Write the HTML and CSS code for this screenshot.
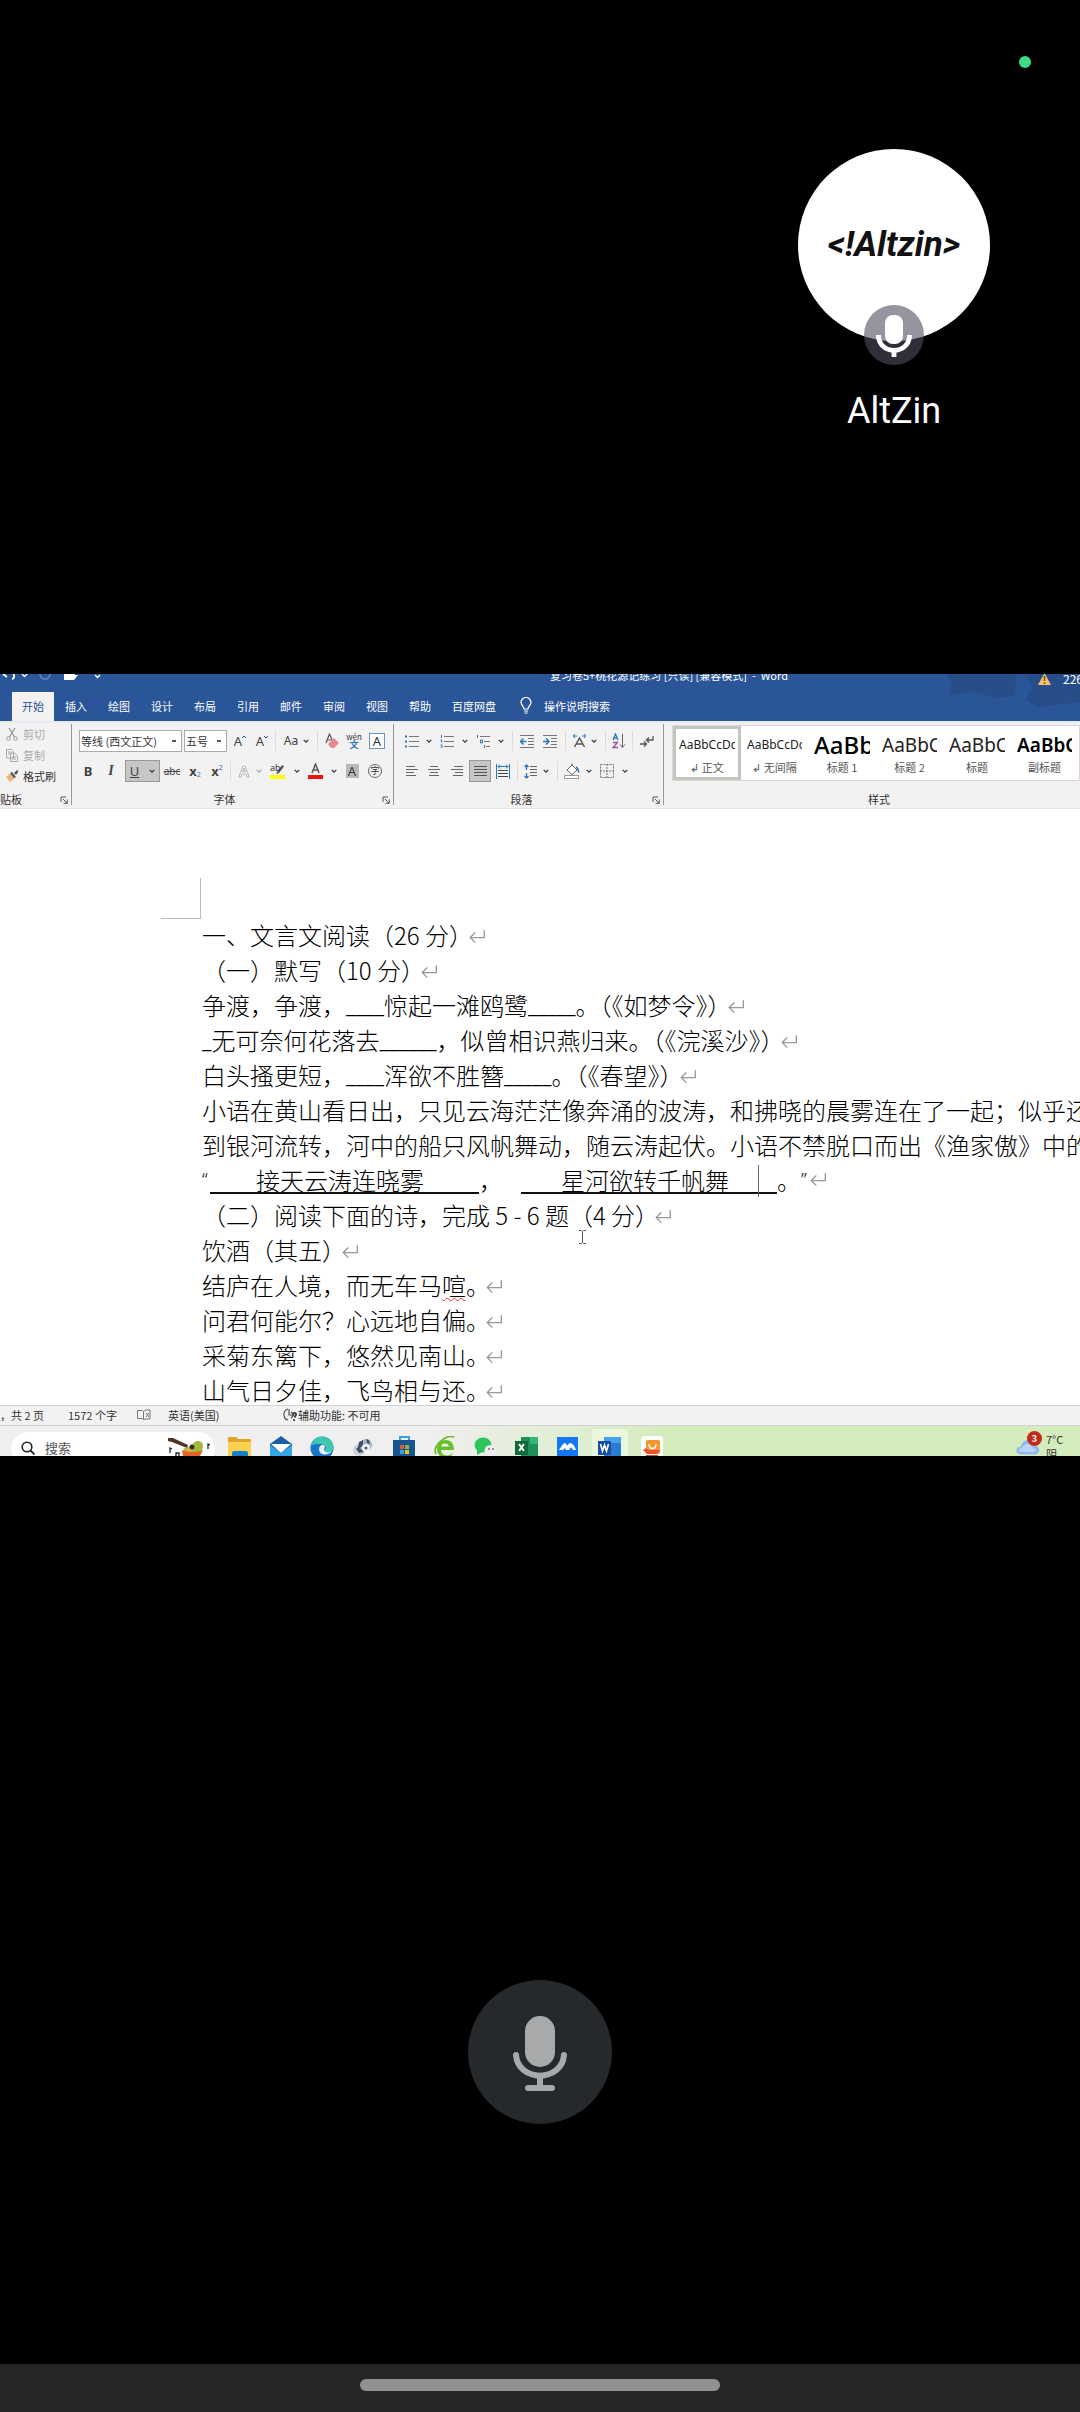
FILE: index.html
```html
<!DOCTYPE html>
<html lang="zh-CN">
<head>
<meta charset="utf-8">
<meta name="viewport" content="width=device-width, initial-scale=1">
<title>AltZin</title>
<link rel="stylesheet" href="styles.css">
</head>
<body>
<svg class="defs" aria-hidden="true">
  <symbol id="chev" viewBox="0 0 6 6"><path d="M.7 1.8 3 4.2 5.3 1.8" fill="none" stroke="#333" stroke-width="1.2"/></symbol>
  <symbol id="ret" viewBox="0 0 16 14"><path d="M14.500 1v6.500H2M6.500 3l-4.500 4.500 4.500 4.500" fill="none" stroke="#999" stroke-width="1.200"/></symbol>
  <symbol id="launch" viewBox="0 0 8 8"><path d="M1 6V1h5M3 3l4 4M7.300 3.500v3.800H3.500" fill="none" stroke="#555" stroke-width="1"/></symbol>
</svg>

<section class="speaker">
  <span class="privacy-dot"></span>
  <div class="person">
    <div class="avatar"><span class="logo">&lt;!Altzin&gt;</span>
      <span class="badge"><svg width="60" height="60" viewBox="0 0 60 60"><rect x="21" y="10" width="18" height="29" rx="8" fill="#fff"/><path d="M14.500 30c0 20.500 31 20.500 31 0M30 45v7" fill="none" stroke="#fff" stroke-width="4.800"/></svg></span>
    </div>
    <div class="name">AltZin</div>
  </div>
</section>

<main class="word">
  <header class="top">
    <svg class="top-art" width="133" height="40" viewBox="0 0 133 40"><path d="M0 0h70l-3 22-20 2-20-6-25 3 3-10zM78 0h55v28l-25 3-18 2-12-8 8-12z" fill="#26497f" opacity=".6"/></svg>
    <div class="titlebar">
      <div class="quick">
        <svg width="110" height="20" viewBox="0 0 110 20"><path d="M3 9l4 3M6 8h5c5 0 3 6 1 6" fill="none" stroke="#fff" stroke-width="1.800"/><path d="M22 9l2.500 2.500L27 9M95 10l2.500 2.500L100 10" fill="none" stroke="#fff" stroke-width="1.300"/><circle cx="45" cy="9" r="5" fill="none" stroke="#5a80bb" stroke-width="2"/><path d="M64 14V6h5l1 2h5v2h3l-4 5H64z" fill="#fff"/></svg>
      </div>
      <span class="doc-title">复习卷5+桃花源记练习 [只读] [兼容模式]&nbsp; -&nbsp; Word</span>
      <span class="user"><svg width="13" height="13" viewBox="0 0 13 13"><path d="M6.500 1 13 13H0z" fill="#f5c26b"/><path d="M6.500 4v5M6.500 10.500V12" stroke="#7a4a10" stroke-width="1.500"/></svg>226</span>
    </div>
    <nav class="tabs">
      <button class="tab active">开始</button><button class="tab">插入</button><button class="tab">绘图</button><button class="tab">设计</button><button class="tab">布局</button><button class="tab">引用</button><button class="tab">邮件</button><button class="tab">审阅</button><button class="tab">视图</button><button class="tab">帮助</button><button class="tab">百度网盘</button>
      <button class="tell"><svg width="12" height="17" viewBox="0 0 12 17"><path d="M4 12c0-3-3-3.500-3-6.500a5 5 0 0 1 10 0C11 8.500 8 9 8 12zM4 14h4M4.500 16h3" fill="none" stroke="#fff" stroke-width="1.200"/></svg>操作说明搜索</button>
    </nav>
  </header>

  <div class="ribbon">
    <section class="group clip">
      <div class="clip-list">
        <button class="cmd off"><svg width="12" height="13" viewBox="0 0 12 13"><path d="M3 0l5.500 9M9 0 3.500 9" stroke="#999" stroke-width="1.300"/><circle cx="2.500" cy="10.500" r="1.800" fill="none" stroke="#999"/><circle cx="9.500" cy="10.500" r="1.800" fill="none" stroke="#999"/></svg>剪切</button>
        <button class="cmd off"><svg width="12" height="13" viewBox="0 0 12 13"><path d="M.5.5h5l2 2V9h-7zM4.500 4h4l3 3v5.500h-7zM6 8h4M6 10h4M2 3h3M2 5h2" fill="none" stroke="#aaa"/></svg>复制</button>
        <button class="cmd"><svg width="12" height="13" viewBox="0 0 12 13"><path d="M0 7l5-4 4 5-5 4z" fill="#e8b67a"/><path d="M4 3l2-1 4 5-2 1zM8 3l3-3 1.500 1.500L10 5z" fill="#555"/></svg>格式刷</button>
      </div>
      <footer class="caption"><span>贴板</span><svg class="launch" width="8" height="8"><use href="#launch"/></svg></footer>
    </section>

    <section class="group font">
      <div class="row">
        <select class="face" aria-label="字体"><option>等线 (西文正文)</option></select>
        <select class="size" aria-label="字号"><option>五号</option></select>
        <button class="w22 glyph" aria-label="增大字号">A<svg class="grow" width="4" height="4" viewBox="0 0 4 4"><path d="M0 3l2-2 2 2" fill="none" stroke="#2b579a"/></svg></button>
        <button class="w18 glyph" aria-label="减小字号">A<svg class="grow" width="4" height="4" viewBox="0 0 4 4"><path d="M0 1l2 2 2-2" fill="none" stroke="#2b579a"/></svg></button>
        <i class="sep"></i>
        <button class="w33 glyph small">Aa<svg class="chev"><use href="#chev"/></svg></button>
        <i class="sep"></i>
        <button class="w20" aria-label="清除格式"><svg width="14" height="16" viewBox="0 0 14 16"><path d="M1 10 4.500 1 8 9M2 7h4" fill="none" stroke="#555" stroke-width="1.200"/><path d="M3 11l6-6 5 5-5 5H6z" fill="#e58a94"/></svg></button>
        <button class="w20 pinyin" aria-label="拼音指南"><small>wén</small><b>文</b></button>
        <button class="w22" aria-label="字符边框"><span class="boxed">A</span></button>
      </div>
      <div class="row">
        <button class="w18 glyph"><b>B</b></button>
        <button class="w24 glyph serif"><i>I</i></button>
        <button class="w35 glyph pressed"><u>U</u><svg class="chev"><use href="#chev"/></svg></button>
        <button class="w20 glyph tiny"><s>abc</s></button>
        <button class="w22 glyph"><b>x</b><sub>2</sub></button>
        <button class="w18 glyph"><b>x</b><sup>2</sup></button>
        <i class="sep"></i>
        <button class="w29 end" aria-label="文本效果"><svg width="12" height="13" viewBox="0 0 12 13"><path d="M1 12 5 1h2l4 11H9L8 9H4l-1 3zM4.500 7h3L6 3z" fill="#fff" stroke="#b5b5b5"/></svg><svg class="chev faint"><use href="#chev"/></svg></button>
        <button class="w37 end wide" aria-label="突出显示"><svg width="16" height="16" viewBox="0 0 16 16"><path d="M7 9l5-7 2 1.500L9 10l-3 1z" fill="#555"/><path d="M0 12h15v4H0z" fill="#ff0"/><text x="0" y="8" class="t9">ab</text></svg><svg class="chev"><use href="#chev"/></svg></button>
        <button class="w35 end wide" aria-label="字体颜色"><svg width="15" height="16" viewBox="0 0 15 16"><path d="M4 10 7.500 1 11 10M5 7h5" fill="none" stroke="#555" stroke-width="1.500"/><path d="M0 12h15v4H0z" fill="#e11"/></svg><svg class="chev"><use href="#chev"/></svg></button>
        <button class="w20"><span class="shade">A</span></button>
        <button class="w22"><span class="ring">字</span></button>
      </div>
      <footer class="caption"><span>字体</span><svg class="launch" width="8" height="8"><use href="#launch"/></svg></footer>
    </section>

    <section class="group para">
      <div class="row">
        <button class="w33 spread" aria-label="项目符号"><svg width="14" height="14" viewBox="0 0 14 14"><path d="M4 2.500h10M4 7.500h10M4 12.500h10" stroke="#777"/><path d="M0 1.500h2v2H0zM0 6.500h2v2H0zM0 11.500h2v2H0z" fill="#2e75b6"/></svg><svg class="chev"><use href="#chev"/></svg></button>
        <button class="w34 spread" aria-label="编号"><svg width="14" height="14" viewBox="0 0 14 14"><path d="M4 2.500h10M4 7.500h10M4 12.500h10" stroke="#777"/><path d="M1.500 1v3M.5 6h1v2h1M.5 11h1.500v3H.5" stroke="#2e75b6" fill="none"/></svg><svg class="chev"><use href="#chev"/></svg></button>
        <button class="w34 spread" aria-label="多级列表"><svg width="15" height="14" viewBox="0 0 15 14"><path d="M4 2.500h10M8 7.500h6M10 12.500h4" stroke="#777"/><path d="M1.500 1v3M4.500 6v3h2V6zM8.500 11v3" stroke="#2e75b6" fill="none"/></svg><svg class="chev"><use href="#chev"/></svg></button>
        <i class="sep"></i>
        <button class="w20" aria-label="减少缩进"><svg width="14" height="14" viewBox="0 0 14 14"><path d="M0 1.500h14M8 4.500h6M8 7.500h6M8 10.500h6M0 13.500h14" stroke="#777"/><path d="M6.500 7.500H1M3.500 4.500l-3 3 3 3" stroke="#2e75b6" stroke-width="1.500" fill="none"/></svg></button>
        <button class="w22" aria-label="增加缩进"><svg width="14" height="14" viewBox="0 0 14 14"><path d="M0 1.500h14M8 4.500h6M8 7.500h6M8 10.500h6M0 13.500h14" stroke="#777"/><path d="M0 7.500h5.500M3 4.500l3 3-3 3" stroke="#2e75b6" stroke-width="1.500" fill="none"/></svg></button>
        <i class="sep"></i>
        <button class="w31 spread" aria-label="中文版式"><svg width="15" height="14" viewBox="0 0 15 14"><path d="M2.500 13 7.500 4l5 9M4.500 10h6" fill="none" stroke="#555" stroke-width="1.500"/><path d="M5 2H1M3 0 1 2l2 2M10 2h4M12 0l2 2-2 2" fill="none" stroke="#2e75b6"/></svg><svg class="chev"><use href="#chev"/></svg></button>
        <i class="sep"></i>
        <button class="w18" aria-label="排序"><svg width="14" height="16" viewBox="0 0 14 16"><path d="M1 7l2.500-6L6 7M2 5h3" fill="none" stroke="#2e75b6" stroke-width="1.300"/><path d="M1 9.500h4.500l-4.500 5h5" fill="none" stroke="#a349a4" stroke-width="1.300"/><path d="M10.500 1v13M8 11.500l2.500 3 2.500-3" fill="none" stroke="#666"/></svg></button>
        <i class="sep"></i>
        <button class="w20" aria-label="显示编辑标记"><svg width="14" height="13" viewBox="0 0 14 13"><path d="M13 1v4H7M9 2.500 6.500 5 9 7.500M0 9h6M4 6.500 6.500 9 4 11.500" fill="none" stroke="#555" stroke-width="1.300"/></svg></button>
      </div>
      <div class="row">
        <button class="w18" aria-label="左对齐"><svg width="12" height="10" viewBox="0 0 12 10"><path d="M0 .5h9M0 3.500h12M0 6.500h8M0 9.500h10" stroke="#666"/></svg></button>
        <button class="w22" aria-label="居中"><svg width="12" height="10" viewBox="0 0 12 10"><path d="M2 .5h8M0 3.500h12M2 6.500h8M1 9.500h10" stroke="#666"/></svg></button>
        <button class="w20" aria-label="右对齐"><svg width="12" height="10" viewBox="0 0 12 10"><path d="M3 .5h9M0 3.500h12M4 6.500h8M2 9.500h10" stroke="#666"/></svg></button>
        <button class="w22 pressed" aria-label="两端对齐"><svg width="13" height="13" viewBox="0 0 13 13"><path d="M0 1.500h13M0 4.500h13M0 7.500h13M0 10.500h13" stroke="#555"/></svg></button>
        <button class="w20" aria-label="分散对齐"><svg width="14" height="15" viewBox="0 0 14 15"><path d="M.5 0v15M13.500 0v15" stroke="#2e75b6"/><path d="M2 2.500h10M4 .5l-2 2 2 2M10 .5l2 2-2 2" stroke="#2e75b6" fill="none"/><path d="M2 6.500h10M2 9.500h10M2 12.500h10" stroke="#444"/></svg></button>
        <i class="sep"></i>
        <button class="w31 spread" aria-label="行距"><svg width="13" height="15" viewBox="0 0 13 15"><path d="M2.500 1v5M.5 3l2-2 2 2M2.500 9v5M.5 12l2 2 2-2" stroke="#2e75b6" stroke-width="1.300" fill="none"/><path d="M6 2.500h7M6 5.500h7M6 8.500h7M6 11.500h7" stroke="#666"/></svg><svg class="chev"><use href="#chev"/></svg></button>
        <i class="sep"></i>
        <button class="w34 spread" aria-label="底纹"><svg width="16" height="16" viewBox="0 0 16 16"><path d="M3 7l5-5 5 5-5 4.500zM8 2V.5" fill="#fff" stroke="#666"/><path d="M12 4c2 1 2.500 3 2.500 5.500" stroke="#2e75b6" stroke-width="1.500" fill="none"/><path d="M.5 12.500h14v3H.5z" fill="#fff" stroke="#999"/></svg><svg class="chev"><use href="#chev"/></svg></button>
        <button class="w34 spread" aria-label="边框"><svg width="14" height="14" viewBox="0 0 14 14"><path d="M.5.5h13v13H.5zM7 0v14M0 7h14" fill="none" stroke="#777" stroke-dasharray="2 1"/></svg><svg class="chev"><use href="#chev"/></svg></button>
      </div>
      <footer class="caption"><span>段落</span><svg class="launch" width="8" height="8"><use href="#launch"/></svg></footer>
    </section>

    <section class="group styles">
      <div class="gallery">
        <button class="style chosen"><span class="sample">AaBbCcDc</span><span>↲ 正文</span></button>
        <button class="style"><span class="sample">AaBbCcDc</span><span>↲ 无间隔</span></button>
        <button class="style"><span class="sample s1">AaBb</span><span>标题 1</span></button>
        <button class="style"><span class="sample s2">AaBbC</span><span>标题 2</span></button>
        <button class="style"><span class="sample s2">AaBbC</span><span>标题</span></button>
        <button class="style"><span class="sample s2 bold">AaBbC</span><span>副标题</span></button>
      </div>
      <footer class="caption"><span>样式</span></footer>
    </section>
  </div>

  <article class="page">
    <div class="margin-mark"></div>
    <p>一、文言文阅读（26 分）<svg class="ret"><use href="#ret"/></svg></p>
    <p>（一）默写（10 分）<svg class="ret"><use href="#ret"/></svg></p>
    <p>争渡，争渡，<span class="blank">____</span>惊起一滩鸥鹭<span class="blank">_____</span>。（《如梦令》）<svg class="ret"><use href="#ret"/></svg></p>
    <p><span class="blank">_</span>无可奈何花落去<span class="blank">______</span>，似曾相识燕归来。（《浣溪沙》）<svg class="ret"><use href="#ret"/></svg></p>
    <p>白头搔更短，<span class="blank">____</span>浑欲不胜簪<span class="blank">_____</span>。（《春望》）<svg class="ret"><use href="#ret"/></svg></p>
    <p>小语在黄山看日出，只见云海茫茫像奔涌的波涛，和拂晓的晨雾连在了一起；似乎还</p>
    <p>到银河流转，河中的船只风帆舞动，随云涛起伏。小语不禁脱口而出《渔家傲》中的</p>
    <p class="answers"><span class="quote">“</span><span class="fill first">接天云涛连晓雾</span><span class="comma">，</span><span class="fill second">星河欲转千帆舞<i class="caret"></i></span>。<span class="quote">”</span><svg class="ret"><use href="#ret"/></svg></p>
    <p>（二）阅读下面的诗，完成 5 - 6 题（4 分）<svg class="ret"><use href="#ret"/></svg><svg class="ibeam" width="7" height="14" viewBox="0 0 7 14"><path d="M0 .5h2.500l1 1 1-1H7M3.500 1v12M0 13.500h2.500l1-1 1 1H7" fill="none" stroke="#555"/></svg></p>
    <p>饮酒（其五）<svg class="ret"><use href="#ret"/></svg></p>
    <p>结庐在人境，而无车马<span class="typo">喧</span>。<svg class="ret"><use href="#ret"/></svg></p>
    <p>问君何能尔？心远地自偏。<svg class="ret"><use href="#ret"/></svg></p>
    <p>采菊东篱下，悠然见南山。<svg class="ret"><use href="#ret"/></svg></p>
    <p>山气日夕佳，飞鸟相与还。<svg class="ret"><use href="#ret"/></svg></p>
  </article>

  <footer class="status">
    <span class="pages">，共 2 页</span>
    <span class="words">1572 个字</span>
    <svg class="book" width="14" height="12" viewBox="0 0 14 12"><path d="M.5 1.500h5l1 1v8l-1-1h-5zM6.500 2.500l2-1.500h4.500v9H8l-1.500 1M9 4l3 4M12 4 9 8" fill="none" stroke="#777"/></svg>
    <span class="lang">英语(美国)</span>
    <span class="access"><svg width="15" height="14" viewBox="0 0 15 14"><path d="M5 1C-1 3 0 11 5 12M6 1v6h4M8 4l3 3-3 3" fill="none" stroke="#444" stroke-width="1.100"/><path d="M10 6c1-2 4-1 3 1l-1.500 2.500M11 11v2" fill="none" stroke="#333" stroke-width="1.600"/></svg>辅助功能: 不可用</span>
  </footer>

  <footer class="taskbar">
    <label class="search"><svg width="14" height="14" viewBox="0 0 14 14"><circle cx="6" cy="6" r="4.800" fill="none" stroke="#222" stroke-width="1.600"/><path d="M9.500 9.500 13.500 13.500" stroke="#222" stroke-width="1.800"/></svg><input type="text" placeholder="搜索" aria-label="搜索">
      <svg width="44" height="22" viewBox="0 0 44 22"><path d="M1 1h5l15 7-1 3L5 5 1 4z" fill="#4a3527"/><path d="M17 12c3-3 6-1 9-5 3-5 10-3 10 2 0 6-7 10-13 9-5 0-8-3-6-6z" fill="#a3b93c"/><path d="M15 13c5 3 13 3 21 0l-3 6c-5 4-13 4-17 0z" fill="#e2622b"/><path d="M18 13l6-4 5 1-6 5z" fill="#e9b13c"/><circle cx="25" cy="10" r="2.500" fill="#333"/><path d="M3 16v-5l2 1M9 21v-5h3v4M41 12V7l2 1" stroke="#222" fill="none" stroke-width="1.300"/></svg></label>
    <div class="apps">
      <a href="#" aria-label="文件资源管理器"><svg viewBox="0 0 24 24"><path d="M0 2q0-1 1-1h7l2 2h12q1 0 1 1v16H0z" fill="#e0a526"/><path d="M0 6h23v17H0z" fill="#fbd155"/><path d="M4 17q0-2 2-2h12q2 0 2 2v6H4z" fill="#1a7fc9"/></svg></a>
      <a href="#" aria-label="邮件"><svg viewBox="0 0 24 24"><path d="M1 8 12 0l11 8v15H1z" fill="#1b5fa8"/><path d="M2 8h20L12 17z" fill="#fff"/><path d="M1 9l11 8 11-8v14H1z" fill="#35a7e8"/></svg></a>
      <a href="#" aria-label="Edge"><svg viewBox="0 0 24 24"><circle cx="12" cy="12" r="11.500" fill="#1676c8"/><path d="M1 10C3-2 22-3 23.500 11c0 6-8 7-9 3 3-2 1-6-3-6S3 8 1 10z" fill="#3fc8b0"/><path d="M9 13c0-3 3-5 5-4 2 2 0 3 0 5 1 3 6 3 8 1-3 5-13 5-13-2z" fill="#eef"/></svg></a>
      <a href="#" aria-label="相册"><svg viewBox="0 0 24 24"><circle cx="8" cy="14" r="6" fill="#cdd4de"/><circle cx="15" cy="9" r="6" fill="#aab3c0"/><path d="M8 6l4-2v5l-3 3 4 4-5 1-3-4 2-2z" fill="#445064"/><path d="M15 3l3 1 1 4-3-1z" fill="#445064"/><circle cx="15" cy="12" r="4" fill="#eef2f8"/><circle cx="15" cy="12" r="1.500" fill="#556"/></svg></a>
      <a href="#" aria-label="Microsoft Store"><svg viewBox="0 0 24 24"><path d="M8 5V1h9v4" fill="none" stroke="#3ca3dd" stroke-width="2"/><path d="M1 4h22v18H1z" fill="#16558f"/><path d="M8 9h4v4H8z" fill="#e8563a"/><path d="M13 9h4v4h-4z" fill="#86bd35"/><path d="M8 14h4v4H8z" fill="#38a5e6"/><path d="M13 14h4v4h-4z" fill="#f5bd2a"/></svg></a>
      <a href="#" aria-label="浏览器"><svg viewBox="0 0 24 24"><path d="M21 14H8c0 6 8 7 12 3-2 7-16 7-16-4S21 0 21 14zM8 10.500h8c-1-4-7-4-8 0z" fill="#6cbf2c"/><path d="M3 18C-1 10 13-2 21 1" fill="none" stroke="#6cbf2c" stroke-width="1.800"/></svg></a>
      <a href="#" aria-label="微信"><svg viewBox="0 0 24 24"><ellipse cx="9" cy="9" rx="8.500" ry="7.500" fill="#2dc45e"/><path d="M3 13v6l5-3z" fill="#2dc45e"/><ellipse cx="16.500" cy="14.500" rx="6" ry="5.500" fill="#eee"/><circle cx="15" cy="13" r="1" fill="#777"/><circle cx="19" cy="13" r="1" fill="#777"/></svg></a>
      <a href="#" aria-label="Excel"><svg viewBox="0 0 24 24"><path d="M6 1h17v22H6z" fill="#1f9158"/><path d="M15 1h8v7h-8z" fill="#35b877"/><path d="M0 5h13v14H0z" fill="#0f6a39"/><path d="M4 8l5 7M9 8l-5 7" stroke="#fff" stroke-width="2"/></svg></a>
      <a href="#" aria-label="腾讯会议"><svg viewBox="0 0 24 24"><path d="M1 1h21v23H1z" fill="#1677f5"/><path d="M3 14c2-3 4-7 6-7 1 0 2 3 2 3s2-3 3-3c3 0 5 4 6 7h-3l-2-3-2 3h-3l-1-2-2 2z" fill="#fff"/></svg></a>
      <a href="#" class="current" aria-label="Word"><svg viewBox="0 0 24 24"><path d="M6 1h17v22H6z" fill="#2b7cd3"/><path d="M6 1h17v6H6z" fill="#41a5ee"/><path d="M0 5h13v14H0z" fill="#174f9e"/><path d="M2.500 8l2 7 2-6 2 6 2-7" fill="none" stroke="#fff" stroke-width="1.600"/></svg></a>
      <a href="#" aria-label="购物"><svg viewBox="0 0 24 24"><rect x="1" width="22" height="26" rx="4" fill="#fff"/><rect x="6" y="4" width="14" height="14" rx="2" fill="#f6962f"/><path d="M9 8c0 6 7 6 7 0" fill="none" stroke="#fff" stroke-width="1.500"/><path d="M3 14l3-2 2 2h12l-3 4H7z" fill="#e8532d"/><path d="M6 19h12v5H6z" fill="#c9472a"/></svg></a>
    </div>
    <div class="weather"><span class="cloud"><svg width="24" height="16" viewBox="0 0 24 16"><path d="M5 15.500c-6 0-6-8 0-8 2-9 12-8 13-1 7 0 7 9 0 9z" fill="#8fb8f0"/><path d="M5 13c-3 0-3-4 1-4 3-6 10-5 11 0 4 0 4 4 0 4z" fill="#b9d5fa"/></svg><b class="count">3</b></span><span class="temp">7°C<br>阴</span></div>
  </footer>
</main>

<section class="controls">
  <button class="mic" aria-label="麦克风"><svg width="54" height="76" viewBox="0 0 54 76"><rect x="12" y="0" width="30" height="51" rx="15" fill="#a7a9ab"/><path d="M3 39c2 27.500 46 27.500 48 0M27 60v11M15 72h24" fill="none" stroke="#a7a9ab" stroke-width="6" stroke-linecap="round"/></svg></button>
</section>
<div class="navbar"><span class="pill"></span></div>
</body>
</html>
```
FILE: styles.css
```css
* { box-sizing: border-box; }
body {
  margin: 0;
  min-height: 100vh;
  display: flex;
  flex-direction: column;
  background: #000;
  font-family: "Noto Sans CJK SC", sans-serif;
  overflow-x: hidden;
}
button { margin: 0; padding: 0; border: 0; background: none; font: inherit; color: inherit; white-space: nowrap; }
svg { flex: none; }
.defs { position: absolute; width: 0; height: 0; }

/* speaker */
.speaker { position: relative; display: flex; justify-content: flex-end; padding: 149px 90px 242px; }
.privacy-dot { position: absolute; top: 56px; right: 49px; width: 12px; height: 12px; border-radius: 50%; background: #3ddc84; }
.person { width: 192px; font-family: Roboto, sans-serif; text-align: center; }
.avatar { position: relative; display: flex; align-items: center; justify-content: center; height: 192px; border-radius: 50%; background: #fff; }
.logo { font: italic 700 35px/40px Roboto, sans-serif; color: #111; }
.badge { position: absolute; left: 66px; top: 156px; width: 60px; height: 60px; border-radius: 50%; background: rgba(76, 79, 94, .6); }
.name { margin-top: 49px; font-size: 36px; line-height: 42px; color: #fff; }

/* word window */
.word { overflow: hidden; background: #fff; font-size: 11px; color: #333; }
.top { position: relative; height: 47px; background: #2a5699; color: #fff; }
.top-art { position: absolute; right: 0; top: 0; }
.titlebar { position: relative; display: flex; justify-content: space-between; height: 18px; overflow: hidden; line-height: 20px; }
.titlebar > * { margin-top: -9px; white-space: nowrap; }
.quick { width: 110px; }
.doc-title { margin-left: 440px; margin-right: auto; }
.user { display: flex; align-items: center; gap: 12px; width: 42px; font-size: 12px; }
.tabs { position: relative; display: flex; gap: 1px; height: 29px; padding-left: 12px; }
.tab { padding: 0 10px 2px; }
.tab.active { background: #f3f2f1; color: #2a5699; }
.tell { display: flex; align-items: center; gap: 12px; margin-left: 13px; padding-bottom: 2px; }

.ribbon { display: flex; height: 88px; background: #f2f2f2; border-top: 2px solid #e6ebf4; border-bottom: 1px solid #e2e2e2; }
.group { display: flex; flex-direction: column; flex: none; margin: 1px 0 3px; border-right: 1px solid #999; }
.caption { display: flex; align-items: center; justify-content: center; position: relative; margin-top: auto; height: 12px; line-height: 11px; }
.launch { position: absolute; right: 3px; top: 3px; }
.clip { width: 72px; }
.clip .caption { justify-content: flex-start; }
.clip-list { display: flex; flex-direction: column; padding: 0 0 0 6px; }
.cmd { display: flex; align-items: center; gap: 5px; height: 21px; line-height: 21px; }
.cmd.off { color: #aaa; }
.font { width: 322px; padding-left: 7px; }
.para { width: 270px; padding-left: 9px; }
.font .caption, .para .caption { padding-right: 23px; }
.row { display: flex; align-items: center; gap: 2px; height: 30px; margin-top: 2px; }
.row + .row { margin-top: 0; }
.row button { display: flex; align-items: center; justify-content: center; height: 22px; gap: 2px; }
.row select { height: 22px; padding: 0 1px; border: 1px solid #ababab; border-radius: 0; appearance: none; font: 11px "Noto Sans CJK SC", sans-serif; color: #333;
  background: #fff linear-gradient(#555, #555) no-repeat right 5px center / 4px 2px; }
.face { width: 103px; }
.size { width: 43px; }
.w18 { width: 18px; } .w20 { width: 20px; } .w22 { width: 22px; } .w24 { width: 24px; }
.w29 { width: 29px; } .w31 { width: 31px; } .w33 { width: 33px; } .w34 { width: 34px; }
.w35 { width: 35px; } .w37 { width: 37px; }
.row .spread { justify-content: space-between; padding: 0 4px 0 2px; }
.row .end { gap: 6px; }
.row .wide { gap: 8px; }
.sep { flex: none; width: 1px; height: 20px; margin: 0 2px; background: #dcdcdc; }
.chev { width: 6px; height: 6px; }
.faint { opacity: .4; }
.row .glyph { gap: 0; font: 13px/16px "Noto Sans", sans-serif; color: #444; }
.row .small { font-size: 12px; }
.row .small .chev { margin-left: 5px; }
.row .tiny { font-size: 10px; }
.row .serif { font-family: "Liberation Serif", serif; font-weight: 700; font-size: 14px; }
.grow { margin-bottom: 8px; }
.glyph sub, .glyph sup { font-size: 7px; line-height: 8px; color: #2e75b6; }
.glyph sub { margin-top: 8px; }
.glyph sup { margin-top: -6px; }
.row .pressed { background: #c6c6c6; border: 1px solid #999; }
.pressed .chev { margin-left: 10px; }
.row .pinyin { flex-direction: column; gap: 0; }
.pinyin small { font-size: 8px; line-height: 7px; }
.pinyin b { font-size: 9px; line-height: 9px; color: #2e75b6; }
.boxed { width: 16px; height: 16px; border: 1px solid #6d94c8; background: #fff; font: 13px/14px "Noto Sans", sans-serif; }
.shade { width: 13px; height: 14px; background: #b9b9b9; font: 13px/14px "Noto Sans", sans-serif; }
.ring { width: 14px; height: 14px; border: 1px solid #666; border-radius: 50%; font-size: 9px; line-height: 12px; }
.t9 { font: 9px "Noto Sans", sans-serif; fill: #333; }

.styles { flex: 1; min-width: 0; border: 0; padding-left: 8px; }
.styles .caption { padding-left: 6px; }
.gallery { display: flex; height: 56px; margin-top: 1px; border: 1px solid #ddd6d2; background: #fff; overflow: hidden; }
.style { flex: none; display: flex; flex-direction: column; align-items: center; width: 68px; padding: 5px 6px 0; color: #555; line-height: 16px; font-size: 11px; }
.style:nth-child(even) { width: 67px; }
.chosen { padding: 2px 3px 0; border: 3px solid #c3c6c0; }
.sample { align-self: stretch; height: 28px; overflow: hidden; font: 12px/28px "Noto Sans", sans-serif; text-align: left; color: #222; }
.s1 { font-size: 24px; font-weight: 500; color: #000; }
.s2 { font-size: 19px; }
.bold { font-weight: 600; color: #000; }

/* document */
.page { padding: 69px 0 0 202px; height: 596px; overflow: hidden; color: #000; font-size: 24px; font-weight: 300; line-height: 35px; white-space: nowrap; }
.page p { position: relative; margin: 0; height: 35px; }
.margin-mark { width: 40px; height: 41px; margin: 0 0 -2px -41px; border: solid #bbb; border-width: 0 1px 1px 0; }
.ret { width: 18px; height: 16px; margin-left: -5px; }
.blank { font-family: Roboto, sans-serif; font-size: 22px; }
.page .answers { display: flex; align-items: center; }
.quote { width: 8px; font-family: "Noto Sans", sans-serif; font-size: 18px; }
.answers .ret { margin-left: 0; }
.comma { width: 42px; }
.fill { position: relative; height: 29px; line-height: 29px; border-bottom: 2px solid #111; }
.first { width: 269px; padding-left: 46px; }
.second { width: 256px; padding-left: 40px; }
.caret { position: absolute; right: 18px; top: 0; width: 1px; height: 32px; background: #666; }
.ibeam { position: absolute; left: 377px; top: 33px; }
.typo { text-decoration: underline wavy #d33 1px; text-underline-offset: 2px; }

/* status and task bars */
.status { display: flex; align-items: center; height: 21px; padding-bottom: 2px; border: solid #d2d2d2; border-width: 1px 0; background: #f2f2f2; white-space: nowrap; }
.pages { width: 68px; }
.words { width: 69px; }
.lang { margin-left: 17px; width: 115px; }
.access { display: flex; align-items: center; }
.taskbar { display: flex; height: 30px; overflow: hidden; background: linear-gradient(90deg, #efefef 0, #efefef 40%, #d5ecbd 62%, #d5ecbd 100%); }
.search { display: flex; flex: none; align-items: center; width: 204px; height: 34px; margin: 6px 4px 0 11px; padding: 0 4px 3px 10px; border-radius: 17px; background: #fff; }
.search input { flex: 1; min-width: 0; padding: 0 0 0 10px; border: 0; background: none; font: 13px "Noto Sans CJK SC", sans-serif; }
.search input::placeholder { color: #555; }
.apps { display: flex; }
.apps a { display: flex; justify-content: center; width: 41px; height: 40px; padding-top: 10px; }
.apps svg { width: 24px; height: 24px; }
.apps .current { width: 36px; margin: 3px 3px 0 4px; padding-top: 7px; border-radius: 4px; background: #ebf6df; }
.weather { display: flex; gap: 6px; margin-left: auto; width: 64px; flex: none; }
.cloud { position: relative; padding-top: 13px; }
.count { position: absolute; left: 11px; top: 5px; width: 15px; height: 15px; border-radius: 50%; background: #c42b1c; color: #fff; font-size: 9px; line-height: 15px; text-align: center; }
.temp { padding-top: 6px; font-size: 11px; line-height: 15px; }

/* call controls */
.controls { flex: 1; display: flex; justify-content: center; padding: 524px 0 240px; }
.mic { display: flex; align-items: center; justify-content: center; width: 144px; height: 144px; padding-top: 3px; border-radius: 50%; background: #25292c; }
.navbar { display: flex; justify-content: center; height: 48px; padding-top: 15px; background: #242628; }
.pill { width: calc(100% / 3); height: 12px; border-radius: 6px; background: #909192; }
```
